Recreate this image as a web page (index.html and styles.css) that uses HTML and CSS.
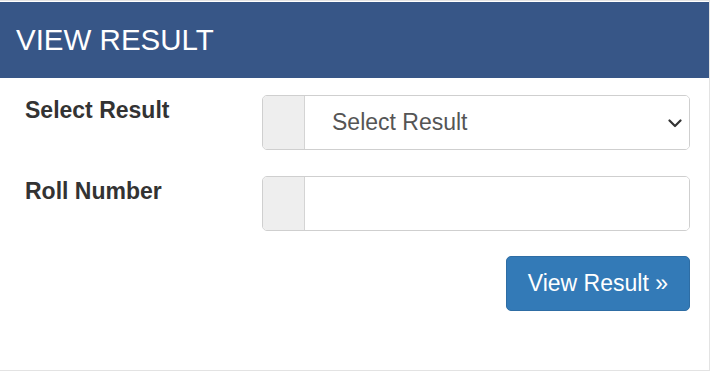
FILE: index.html
```html
<!DOCTYPE html>
<html>
<head>
<meta charset="utf-8">
<link rel="stylesheet" href="styles.css">
</head>
<body>
<div class="panel">
  <div class="panel-heading">VIEW RESULT</div>
  <div class="panel-body">
    <div class="form-row">
      <label class="form-label">Select Result</label>
      <div class="input-group">
        <span class="addon"></span>
        <div class="control select">
          <span class="select-text">Select Result</span>
          <svg class="chevron" width="14" height="9" viewBox="0 0 14 9"><path d="M1.5 1.5 L7 7 L12.5 1.5" fill="none" stroke="#333" stroke-width="2.2" stroke-linecap="round" stroke-linejoin="round"/></svg>
        </div>
      </div>
    </div>
    <div class="form-row">
      <label class="form-label">Roll Number</label>
      <div class="input-group">
        <span class="addon"></span>
        <div class="control"></div>
      </div>
    </div>
    <div class="actions">
      <button class="btn">View Result »</button>
    </div>
  </div>
</div>
</body>
</html>
```
FILE: styles.css
```css
html, body {
  margin: 0;
  padding: 0;
  background: #fff;
  font-family: "Liberation Sans", Arial, sans-serif;
}
.panel {
  width: 710px;
  height: 371px;
  border: 1px solid #e3e3e3;
  border-left: none;
  box-sizing: border-box;
  background: #fff;
}
.panel-heading {
  height: 76px;
  margin-top: 1px;
  background: #375687;
  color: #fff;
  font-size: 29.5px;
  line-height: 76px;
  padding-left: 16px;
  box-sizing: border-box;
}
.panel-body {
  padding: 17px 19px 0 25px;
  display: flex;
  flex-direction: column;
  gap: 26px;
}
.form-row {
  display: flex;
  align-items: flex-start;
}
.form-label {
  width: 237px;
  padding-top: 2px;
  font-size: 23px;
  line-height: 1.2;
  font-weight: bold;
  color: #333;
}
.input-group {
  display: flex;
  width: 428px;
  height: 55px;
  border: 1px solid #cfcfcf;
  border-radius: 5px;
  box-sizing: border-box;
  overflow: hidden;
}
.addon {
  width: 41px;
  background: #eee;
  border-right: 1px solid #d4d4d4;
}
.control {
  flex: 1;
  background: #fff;
  display: flex;
  align-items: center;
}
.select-text {
  flex: 1;
  padding-left: 27px;
  font-size: 23px;
  color: #555;
}
.chevron {
  margin-right: 7px;
  margin-top: 1px;
}
.actions {
  display: flex;
  justify-content: flex-end;
  margin-top: -1px;
}
.btn {
  height: 55px;
  padding: 0 21px;
  background: #337ab7;
  border: 1px solid #2e6da4;
  border-radius: 5px;
  color: #fff;
  font-family: "Liberation Sans", Arial, sans-serif;
  font-size: 23px;
}
```
